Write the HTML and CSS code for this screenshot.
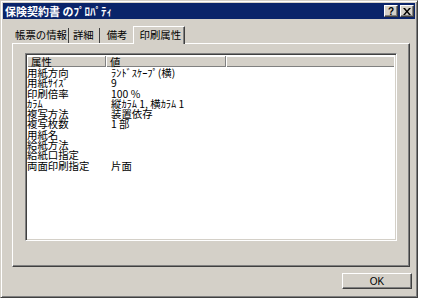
FILE: index.html
```html
<!DOCTYPE html>
<html lang="ja">
<head>
  <meta charset="UTF-8">
  <title>保険契約書 のﾌﾟﾛﾊﾟﾃｨ</title>
  <link rel="stylesheet" href="styles.css">
</head>
<body>
  <div class="window">
    <div class="titlebar">
      <span class="title">保険契約書 のﾌﾟﾛﾊﾟﾃｨ</span>
      <div class="caption-buttons">
        <button class="cap-btn">?</button>
        <button class="cap-btn close">
          <svg width="8" height="7" viewBox="0 0 8 7"><path d="M0 0h2l2 2.5L6 0h2L5 3.5 8 7H6L4 4.5 2 7H0l3-3.5z" fill="#000"/></svg>
        </button>
      </div>
    </div>

    <div class="content">
      <div class="tabs">
        <div class="tab tab-info">帳票の情報</div>
        <div class="tab tab-detail">詳細</div>
        <div class="tab tab-note">備考</div>
        <div class="tab active">印刷属性</div>
      </div>

      <div class="panel">
        <div class="listview">
          <div class="list-header">
            <div class="col-head col-name">属性</div>
            <div class="col-head col-value">値</div>
            <div class="col-head col-rest"></div>
          </div>
          <div class="list-body">
            <div class="row"><span class="col-name">用紙方向</span><span class="col-value">ﾗﾝﾄﾞｽｹｰﾌﾟ(横)</span></div>
            <div class="row"><span class="col-name">用紙ｻｲｽﾞ</span><span class="col-value">9</span></div>
            <div class="row"><span class="col-name">印刷倍率</span><span class="col-value">100 %</span></div>
            <div class="row"><span class="col-name">ｶﾗﾑ</span><span class="col-value">縦ｶﾗﾑ 1, 横ｶﾗﾑ 1</span></div>
            <div class="row"><span class="col-name">複写方法</span><span class="col-value">装置依存</span></div>
            <div class="row"><span class="col-name">複写枚数</span><span class="col-value">1 部</span></div>
            <div class="row"><span class="col-name">用紙名</span><span class="col-value"></span></div>
            <div class="row"><span class="col-name">給紙方法</span><span class="col-value"></span></div>
            <div class="row"><span class="col-name">給紙口指定</span><span class="col-value"></span></div>
            <div class="row"><span class="col-name">両面印刷指定</span><span class="col-value">片面</span></div>
          </div>
        </div>
      </div>

      <div class="footer">
        <button class="ok-btn">OK</button>
      </div>
    </div>
  </div>
</body>
</html>
```

FILE: styles.css
```css
* {
  font-family: "Noto Sans CJK JP", "Liberation Sans", sans-serif;
  box-sizing: border-box;
}
body {
  margin: 0;
  background: #fff;
}
.window {
  width: 418px;
  height: 298px;
  background: #d4d0c8;
  border: 1px solid;
  border-color: #d4d0c8 #404040 #404040 #d4d0c8;
  box-shadow: inset 1px 1px 0 #fff, inset -1px -1px 0 #808080;
  padding: 2px;
  display: flex;
  flex-direction: column;
}
.titlebar {
  height: 16px;
  background: #0a246a;
  color: #fff;
  display: flex;
  align-items: center;
  justify-content: space-between;
  padding: 0 1px 0 2px;
}
.title {
  font-size: 11px;
  font-weight: bold;
  line-height: 16px;
}
.caption-buttons {
  display: flex;
  gap: 2px;
}
.cap-btn {
  width: 14px;
  height: 12px;
  padding: 0;
  background: #d4d0c8;
  border: 1px solid;
  border-color: #fff #404040 #404040 #fff;
  box-shadow: inset -1px -1px 0 #808080;
  font-family: "Liberation Sans", sans-serif;
  font-weight: bold;
  font-size: 10px;
  line-height: 9px;
  color: #000;
  display: flex;
  align-items: center;
  justify-content: center;
}
.content {
  flex: 1;
  display: flex;
  flex-direction: column;
  padding: 6px 2px 0 9px;
}
.tabs {
  display: flex;
  align-items: flex-end;
  height: 18px;
  position: relative;
  z-index: 1;
}
.tab {
  font-size: 10.4px;
  line-height: 14px;
  height: 15px;
  color: #000;
  white-space: nowrap;
}
.tab-info {
  padding: 0 1px 0 3px;
  border-right: 1px solid #404040;
}
.tab-detail {
  padding: 0 5px 0 4px;
  border-right: 1px solid #404040;
}
.tab-note {
  padding: 0 5px 0 7px;
}
.tab.active {
  height: 18px;
  line-height: 16px;
  padding: 0 3px 0 6px;
  border-top: 1px solid #fff;
  border-left: 1px solid #fff;
  border-right: 1px solid #404040;
  box-shadow: inset -1px 0 0 #808080;
  background: #d4d0c8;
  margin-bottom: -1px;
}
.panel {
  width: 398px;
  height: 224px;
  border: 1px solid;
  border-color: #fff #404040 #404040 #fff;
  box-shadow: inset -1px -1px 0 #808080;
  padding: 9px 12px 0 12px;
}
.listview {
  height: 188px;
  background: #fff;
  border: 1px solid;
  border-color: #808080 #fff #fff #808080;
  box-shadow: inset 1px 1px 0 #404040, inset -1px -1px 0 #d4d0c8;
  padding: 2px 2px 2px 1px;
}
.list-header {
  display: flex;
  height: 11px;
}
.col-head {
  background: #d4d0c8;
  border-right: 1px solid #808080;
  box-shadow: inset 1px 1px 0 #fff, inset 0 -1px 0 #808080;
  font-size: 10.4px;
  line-height: 11px;
  padding-left: 4px;
}
.col-head.col-name {
  width: 79px;
}
.col-head.col-value {
  width: 120px;
}
.col-head.col-rest {
  flex: 1;
  border-right: none;
}
.list-body {
  padding-top: 1px;
}
.row {
  display: flex;
  height: 10.3px;
  font-size: 10.4px;
  line-height: 10px;
  color: #000;
}
.row .col-name {
  width: 84px;
}
.footer {
  display: flex;
  justify-content: flex-end;
  padding-top: 6px;
  padding-right: 1px;
}
.ok-btn {
  width: 70px;
  height: 16px;
  background: #d4d0c8;
  border: 1px solid;
  border-color: #fff #404040 #404040 #fff;
  box-shadow: inset -1px -1px 0 #808080;
  font-family: "Liberation Sans", sans-serif;
  font-size: 10px;
  padding: 0;
  color: #000;
}
```
